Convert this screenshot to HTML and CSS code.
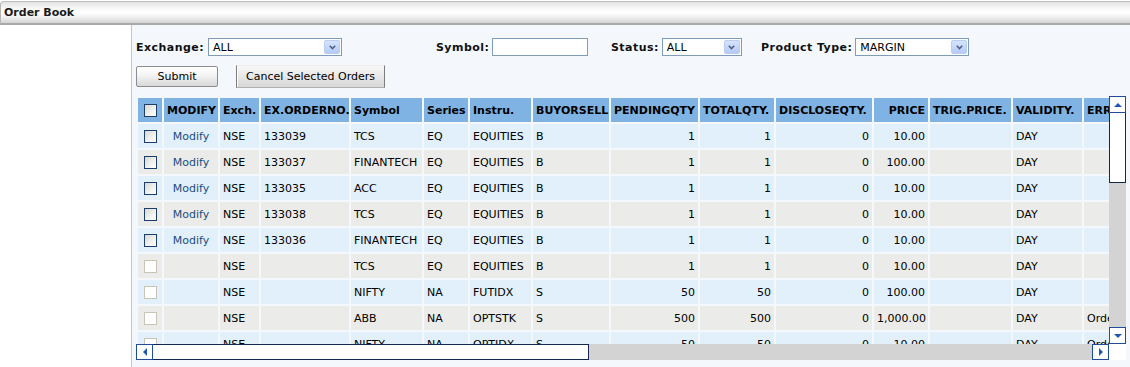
FILE: index.html
```html
<!DOCTYPE html>
<html>
<head>
<meta charset="utf-8">
<title>Order Book</title>
<link rel="stylesheet" href="styles.css">
</head>
<body>
<div class="titlebar">Order Book</div>
<div class="main">
  <div class="sidebar"></div>
  <div class="panel">
    <div class="filters">
      <div class="fgroup fg1">
        <span class="flabel">Exchange:</span>
        <div class="combo w-ex"><span>ALL</span><span class="combo-btn"><svg width="7" height="5" viewBox="0 0 7 5"><path d="M0.8 0.8 L3.5 3.6 L6.2 0.8" fill="none" stroke="#4a5f86" stroke-width="1.5"/></svg></span></div>
      </div>
      <div class="fgroup fg2">
        <span class="flabel">Symbol:</span>
        <div class="textbox w-sym"></div>
      </div>
      <div class="fgroup fg3">
        <span class="flabel">Status:</span>
        <div class="combo w-st"><span>ALL</span><span class="combo-btn"><svg width="7" height="5" viewBox="0 0 7 5"><path d="M0.8 0.8 L3.5 3.6 L6.2 0.8" fill="none" stroke="#4a5f86" stroke-width="1.5"/></svg></span></div>
      </div>
      <div class="fgroup">
        <span class="flabel">Product Type:</span>
        <div class="combo w-pt"><span>MARGIN</span><span class="combo-btn"><svg width="7" height="5" viewBox="0 0 7 5"><path d="M0.8 0.8 L3.5 3.6 L6.2 0.8" fill="none" stroke="#4a5f86" stroke-width="1.5"/></svg></span></div>
      </div>
    </div>
    <div class="actions">
      <button class="btn-submit">Submit</button>
      <button class="btn-cancel">Cancel Selected Orders</button>
    </div>
    <div class="grid">
      <div class="viewport">
        <table>
          <thead>
            <tr>
              <th class="w-cb c"><span class="cb"></span></th>
              <th class="w-mod">MODIFY</th>
              <th class="w-exch">Exch.</th>
              <th class="w-ord">EX.ORDERNO.</th>
              <th class="w-sy">Symbol</th>
              <th class="w-se">Series</th>
              <th class="w-in">Instru.</th>
              <th class="w-bs">BUYORSELL</th>
              <th class="w-pq">PENDINGQTY</th>
              <th class="w-tq">TOTALQTY.</th>
              <th class="w-dq">DISCLOSEQTY.</th>
              <th class="w-pr r">PRICE</th>
              <th class="w-tp">TRIG.PRICE.</th>
              <th class="w-va">VALIDITY.</th>
              <th class="w-er">ERROR</th>
            </tr>
          </thead>
          <tbody>
            <tr class="o"><td class="c"><span class="cb"></span></td><td class="c"><a class="mod" href="#">Modify</a></td><td>NSE</td><td>133039</td><td>TCS</td><td>EQ</td><td>EQUITIES</td><td>B</td><td class="r">1</td><td class="r">1</td><td class="r">0</td><td class="r">10.00</td><td></td><td>DAY</td><td></td></tr>
            <tr class="e"><td class="c"><span class="cb"></span></td><td class="c"><a class="mod" href="#">Modify</a></td><td>NSE</td><td>133037</td><td>FINANTECH</td><td>EQ</td><td>EQUITIES</td><td>B</td><td class="r">1</td><td class="r">1</td><td class="r">0</td><td class="r">100.00</td><td></td><td>DAY</td><td></td></tr>
            <tr class="o"><td class="c"><span class="cb"></span></td><td class="c"><a class="mod" href="#">Modify</a></td><td>NSE</td><td>133035</td><td>ACC</td><td>EQ</td><td>EQUITIES</td><td>B</td><td class="r">1</td><td class="r">1</td><td class="r">0</td><td class="r">10.00</td><td></td><td>DAY</td><td></td></tr>
            <tr class="e"><td class="c"><span class="cb"></span></td><td class="c"><a class="mod" href="#">Modify</a></td><td>NSE</td><td>133038</td><td>TCS</td><td>EQ</td><td>EQUITIES</td><td>B</td><td class="r">1</td><td class="r">1</td><td class="r">0</td><td class="r">10.00</td><td></td><td>DAY</td><td></td></tr>
            <tr class="o"><td class="c"><span class="cb"></span></td><td class="c"><a class="mod" href="#">Modify</a></td><td>NSE</td><td>133036</td><td>FINANTECH</td><td>EQ</td><td>EQUITIES</td><td>B</td><td class="r">1</td><td class="r">1</td><td class="r">0</td><td class="r">10.00</td><td></td><td>DAY</td><td></td></tr>
            <tr class="e"><td class="c"><span class="cb dis"></span></td><td></td><td>NSE</td><td></td><td>TCS</td><td>EQ</td><td>EQUITIES</td><td>B</td><td class="r">1</td><td class="r">1</td><td class="r">0</td><td class="r">10.00</td><td></td><td>DAY</td><td></td></tr>
            <tr class="o"><td class="c"><span class="cb dis"></span></td><td></td><td>NSE</td><td></td><td>NIFTY</td><td>NA</td><td>FUTIDX</td><td>S</td><td class="r">50</td><td class="r">50</td><td class="r">0</td><td class="r">100.00</td><td></td><td>DAY</td><td></td></tr>
            <tr class="e"><td class="c"><span class="cb dis"></span></td><td></td><td>NSE</td><td></td><td>ABB</td><td>NA</td><td>OPTSTK</td><td>S</td><td class="r">500</td><td class="r">500</td><td class="r">0</td><td class="r">1,000.00</td><td></td><td>DAY</td><td>Order Rejected</td></tr>
            <tr class="o"><td class="c"><span class="cb dis"></span></td><td></td><td>NSE</td><td></td><td>NIFTY</td><td>NA</td><td>OPTIDX</td><td>S</td><td class="r">50</td><td class="r">50</td><td class="r">0</td><td class="r">10.00</td><td></td><td>DAY</td><td>Order Rejected</td></tr>
          </tbody>
        </table>
      </div>
      <div class="vscroll">
        <div class="sb-btn"><svg width="8" height="4" viewBox="0 0 8 4"><polygon points="0,4 4,0 8,4" fill="#1d57b2"/></svg></div>
        <div class="vthumb"></div>
        <div class="vtrack"></div>
        <div class="sb-btn"><svg width="8" height="4" viewBox="0 0 8 4"><polygon points="0,0 8,0 4,4" fill="#1d57b2"/></svg></div>
      </div>
      <div class="hscroll">
        <div class="sb-btn"><svg width="4" height="8" viewBox="0 0 4 8"><polygon points="4,0 0,4 4,8" fill="#1d57b2"/></svg></div>
        <div class="hthumb"></div>
        <div class="htrack"></div>
        <div class="sb-btn"><svg width="4" height="8" viewBox="0 0 4 8"><polygon points="0,0 4,4 0,8" fill="#1d57b2"/></svg></div>
      </div>
      <div class="corner"></div>
    </div>
  </div>
</div>
</body>
</html>
```
FILE: styles.css
```css
* { box-sizing: border-box; }

body {
  margin: 0;
  width: 1130px;
  height: 367px;
  overflow: hidden;
  background: #fff;
  font-family: "DejaVu Sans", Verdana, sans-serif;
  font-size: 11px;
  color: #000;
}

.titlebar {
  margin-top: 1px;
  height: 24px;
  border-top: 1px solid #bdbdbd;
  border-bottom: 2px solid #a8a8a8;
  border-left: 1px solid #b5b5b5;
  border-top-left-radius: 4px;
  background: linear-gradient(#e2e2e2 0%, #f8f8f8 30%, #ffffff 50%, #f0f0f0 72%, #d4d4d4 100%);
  font-weight: bold;
  color: #1a1a1a;
  padding-left: 3px;
  line-height: 21px;
}

.main {
  display: flex;
  height: 342px;
}

.sidebar {
  width: 132px;
  border-right: 1px solid #c4c4c4;
  background: #fff;
}

.panel {
  flex: 1;
  background: #f4f8fc;
  padding: 13px 0 0 4px;
}

.filters {
  display: flex;
  align-items: center;
  height: 18px;
}

.fgroup {
  display: flex;
  align-items: center;
  gap: 3px;
}

.fg1 { width: 300px; gap: 4px; }
.fg2 { width: 175px; }
.fg3 { width: 150px; }

.flabel {
  font-weight: bold;
  color: #111;
  letter-spacing: 0.45px;
}

.combo {
  height: 18px;
  border: 1px solid #7f9db9;
  background: #fff;
  display: flex;
  align-items: center;
  justify-content: space-between;
  padding: 0 1px 0 4px;
}

.combo-btn {
  width: 16px;
  height: 14px;
  background: linear-gradient(#d6e3fd, #b5caf5);
  border: 1px solid #b9cdf2;
  border-radius: 2px;
  display: flex;
  align-items: center;
  justify-content: center;
}

.textbox {
  height: 18px;
  border: 1px solid #7f9db9;
  background: #fff;
}

.w-ex { width: 134px; }
.w-sym { width: 96px; }
.w-st { width: 80px; }
.w-pt { width: 114px; }

.actions {
  display: flex;
  align-items: center;
  height: 23px;
  margin-top: 9px;
}

.btn-submit {
  width: 82px;
  height: 21px;
  padding: 0;
  font: inherit;
  color: #000;
  border: 1px solid #8c8c8c;
  border-radius: 2px;
  background: linear-gradient(#ffffff, #f3f3f3 45%, #d9d9d9);
}

.btn-cancel {
  width: 149px;
  height: 23px;
  margin-left: 18px;
  padding: 0;
  font: inherit;
  color: #000;
  border: 1px solid;
  border-color: #ececec #7c7c7c #b0b0b0 #7c7c7c;
  box-shadow: inset 1px 0 0 #ffffff;
  background: linear-gradient(#f7f7f7, #e6e6e6 55%, #d6d6d6);
}

.grid {
  display: grid;
  grid-template-columns: 973px 17px;
  grid-template-rows: 248px 16px;
  margin-top: 8px;
}

.viewport {
  overflow: hidden;
}

table {
  border-collapse: separate;
  border-spacing: 2px;
  table-layout: fixed;
  width: 1070px;
}

th, td {
  height: 24px;
  padding: 0 3px;
  white-space: nowrap;
  overflow: hidden;
  text-align: left;
}

th {
  background: #7fb3e3;
  font-weight: bold;
}

tr.o td { background: #e2f0fc; }
tr.e td { background: #ebecea; }

.r { text-align: right; }
.c { text-align: center; }

.w-cb { width: 24px; }
.w-mod { width: 54px; }
.w-exch { width: 39px; }
.w-ord { width: 88px; }
.w-sy { width: 71px; }
.w-se { width: 44px; }
.w-in { width: 61px; }
.w-bs { width: 76px; }
.w-pq { width: 87px; }
.w-tq { width: 74px; }
.w-dq { width: 96px; }
.w-pr { width: 54px; }
.w-tp { width: 81px; }
.w-va { width: 69px; }
.w-er { width: 120px; }

.cb {
  display: inline-block;
  vertical-align: middle;
  width: 13px;
  height: 13px;
  border: 1px solid #1c3e6c;
  background: linear-gradient(135deg, #d9d9d3, #f6f6f4 70%, #ffffff);
}

.cb.dis {
  border-color: #c8c5b6;
  background: #fff;
}

.mod {
  color: #1c4b7e;
  text-decoration: none;
}

.vscroll {
  display: flex;
  flex-direction: column;
}

.sb-btn {
  flex: none;
  width: 17px;
  height: 17px;
  background: #fff;
  border: 1px solid #1f4d9c;
  display: flex;
  align-items: center;
  justify-content: center;
}

.hscroll .sb-btn {
  height: 16px;
}

.vthumb {
  height: 70px;
  background: #fff;
  border: 1px solid #14284f;
  border-top: none;
}

.vtrack {
  flex: 1;
  background: #d3d3d3;
}

.hscroll {
  display: flex;
}

.hthumb {
  width: 436px;
  background: #fff;
  border: 1px solid #14284f;
  border-left: none;
}

.htrack {
  flex: 1;
  background: #d3d3d3;
}

.corner {
  background: #fff;
}
```
